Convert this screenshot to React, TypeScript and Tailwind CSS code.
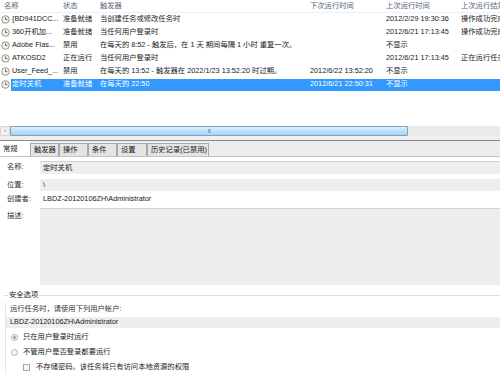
import React from "react";

const Clock = () => (
  <svg width="9" height="9" viewBox="0 0 9 9" className="shrink-0">
    <circle cx="4.5" cy="4.5" r="3.8" fill="#f3efdc" stroke="#8c8c8c" strokeWidth="0.9" />
    <path d="M4.5 2.2 V4.6 H6.4" fill="none" stroke="#555" strokeWidth="0.8" />
  </svg>
);

type Row = { name: string; status: string; trigger: string; next: string; last: string; result: string; sel?: boolean };

const rows: Row[] = [
  { name: "{BD941DCC...", status: "准备就绪", trigger: "当创建任务或修改任务时", next: "", last: "2012/2/29 19:30:36", result: "操作成功完成。" },
  { name: "360开机加...", status: "准备就绪", trigger: "当任何用户登录时", next: "", last: "2012/6/21 17:13:45", result: "操作成功完成。" },
  { name: "Adobe Flas...", status: "禁用", trigger: "在每天的 8:52 - 触发后，在 1 天 期间每隔 1 小时 重复一次。", next: "", last: "不显示", result: "" },
  { name: "ATKOSD2", status: "正在运行", trigger: "当任何用户登录时", next: "", last: "2012/6/21 17:13:45", result: "正在运行任务。" },
  { name: "User_Feed_...", status: "禁用", trigger: "在每天的 13:52 - 触发器在 2022/1/23 13:52:20 时过期。", next: "2012/6/22 13:52:20", last: "不显示", result: "" },
  { name: "定时关机", status: "准备就绪", trigger: "在每天的 22:50", next: "2012/6/21 22:50:31", last: "不显示", result: "", sel: true },
];

const Cell = ({ w, children }: { w: string; children?: React.ReactNode }) => (
  <div className={`${w} shrink-0 whitespace-nowrap overflow-hidden`}>{children}</div>
);

export default function App() {
  return (
    <div
      className="w-[500px] h-[381px] overflow-hidden bg-white text-[7.3px] text-[#1a1a1a] flex flex-col"
      style={{ fontFamily: '"Liberation Sans","Noto Sans CJK SC",sans-serif' }}
    >
      {/* list */}
      <div className="h-[126px] flex flex-col">
        <div className="h-[13px] flex items-center text-[#55657a] border-b border-[#eef0f3]">
          <div className="w-[4px] shrink-0" />
          <Cell w="w-[59px]">名称</Cell>
          <Cell w="w-[37px]">状态</Cell>
          <Cell w="w-[210px]">触发器</Cell>
          <Cell w="w-[76px]">下次运行时间</Cell>
          <Cell w="w-[75px]">上次运行时间</Cell>
          <Cell w="w-[39px]">上次运行结果</Cell>
        </div>
        {rows.map((r, i) => (
          <div key={i} className="h-[13px] flex items-center">
            <div className="w-[11px] shrink-0 flex justify-center">
              <Clock />
            </div>
            <div className={`flex items-center h-[12px] flex-1 ${r.sel ? "bg-[#3399ff] text-white" : ""}`}>
              <Cell w="w-[52px] pl-px">{r.name}</Cell>
              <Cell w="w-[37px]">{r.status}</Cell>
              <Cell w="w-[210px]">{r.trigger}</Cell>
              <Cell w="w-[76px]">{r.next}</Cell>
              <Cell w="w-[75px]">{r.last}</Cell>
              <Cell w="w-[39px]">{r.result}</Cell>
            </div>
          </div>
        ))}
      </div>

      {/* horizontal scrollbar */}
      <div className="h-[10px] flex bg-[#ebebeb]">
        <div className="w-[10px] flex items-center justify-center bg-[#f0f0f0] border border-[#d6d6d6] text-[5px] text-[#555]">‹</div>
        <div className="w-[398px] bg-gradient-to-b from-[#dcf0fc] to-[#a6d4f2] border border-[#7aa3c4] rounded-[1px] flex items-center justify-center">
          <span className="text-[5px] leading-none text-[#5b7a95] tracking-[-0.5px]">III</span>
        </div>
        <div className="flex-1" />
      </div>
      <div className="h-[4px] bg-[#f0f0f0]" />
      <div className="h-px bg-[#8a8a8a]" />

      {/* tab strip */}
      <div className="h-[16px] flex bg-[#ededed] border-b border-[#c4c4c4]">
        <div className="w-[30px] bg-white flex items-center pl-[3px] pt-[1px]">常规</div>
        {[
          ["触发器", "w-[29px]"],
          ["操作", "w-[29px]"],
          ["条件", "w-[29px]"],
          ["设置", "w-[30px]"],
          ["历史记录(已禁用)", "w-[62px]"],
        ].map(([t, w]) => (
          <div key={t} className={`${w} mt-[2px] h-[13px] bg-[#e4e4e4] border border-b-0 border-[#a9a9a9] flex items-center pl-[3px] whitespace-nowrap`}>
            {t}
          </div>
        ))}
      </div>

      {/* general page */}
      <div className="flex flex-col">
        <div className="mt-[4px] h-[13px] flex items-center">
          <div className="w-[40px] pl-[7px] shrink-0 text-[#333]">名称:</div>
          <div className="flex-1 h-full bg-[#eeeeee] border-t border-[#d2d2d2] flex items-center pl-[3px]">定时关机</div>
        </div>
        <div className="mt-[5px] h-[12px] flex items-center">
          <div className="w-[40px] pl-[7px] shrink-0 text-[#333]">位置:</div>
          <div className="flex-1 h-full bg-[#eeeeee] flex items-center pl-[3px]">\</div>
        </div>
        <div className="h-[16px] flex items-center">
          <div className="w-[40px] pl-[7px] shrink-0 text-[#333]">创建者:</div>
          <div className="flex-1 pl-[3px]">LBDZ-20120106ZH\Administrator</div>
        </div>
        <div className="mt-[1px] h-[77px] flex">
          <div className="w-[40px] pl-[7px] pt-[3px] shrink-0 text-[#333]">描述:</div>
          <div className="flex-1 h-full bg-[#eeeeee] border-t border-[#d2d2d2]" />
        </div>

        {/* security options */}
        <div className="mt-[3px] h-[14px] flex items-center">
          <div className="w-[4px] mt-[1px] ml-[4px] h-px bg-[#dadada]" />
          <div className="px-[1px] shrink-0">安全选项</div>
          <div className="flex-1 h-px bg-[#dcdcdc]" />
        </div>
        <div className="ml-[5px] border-l border-[#e6e6e6] flex flex-col">
          <div className="h-[15px] flex items-center pl-[4px] text-[#333]">运行任务时，请使用下列用户帐户:</div>
          <div className="h-[11px] flex items-center pl-[4px] bg-[#eeeeee]">LBDZ-20120106ZH\Administrator</div>
          <div className="h-[15px] mt-[2px] flex items-center pl-[5px] gap-[5px]">
            <span className="w-[7px] h-[7px] rounded-full border border-[#b4b4b4] bg-[#f4f4f4] flex items-center justify-center">
              <span className="w-[3px] h-[3px] rounded-full bg-[#9a9a9a]" />
            </span>
            <span>只在用户登录时运行</span>
          </div>
          <div className="h-[15px] flex items-center pl-[5px] gap-[5px]">
            <span className="w-[7px] h-[7px] rounded-full border border-[#b4b4b4] bg-[#f4f4f4]" />
            <span>不管用户是否登录都要运行</span>
          </div>
          <div className="h-[14px] flex items-center pl-[17px] gap-[6px]">
            <span className="w-[7px] h-[7px] border border-[#a8a8a8] bg-[#f7f7f7]" />
            <span>不存储密码。该任务将只有访问本地资源的权限</span>
          </div>
        </div>
      </div>
    </div>
  );
}
